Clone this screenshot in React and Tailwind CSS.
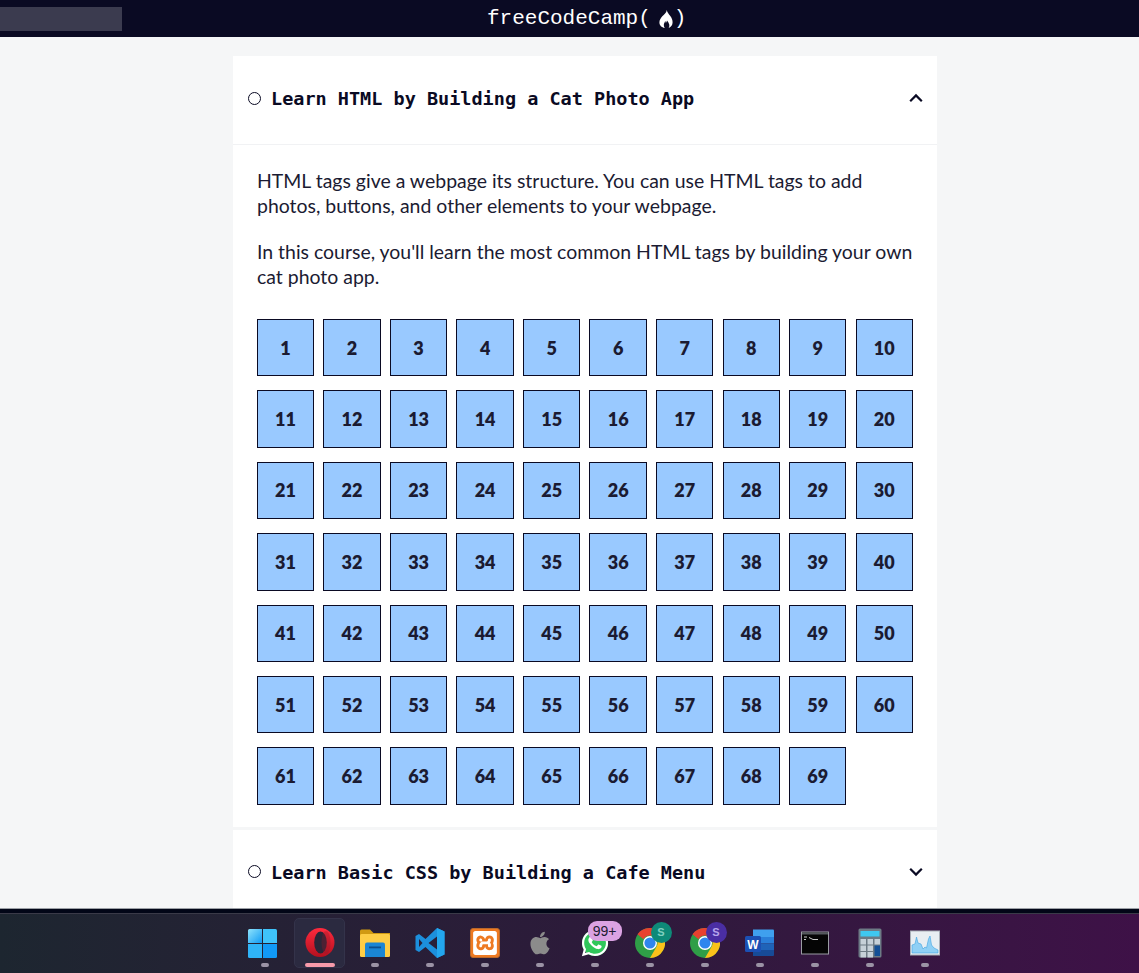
import { FaApple, FaWhatsapp } from "react-icons/fa";
import { SiXampp } from "react-icons/si";

const steps = Array.from({ length: 69 }, (_, i) => i + 1);

function Radio() {
  return <span className="w-[13px] h-[13px] rounded-full border border-[#0a0a23] shrink-0" />;
}

function Chevron({ up }) {
  return (
    <svg width="14" height="10" viewBox="0 0 14 10" className="shrink-0 translate-x-[1px]">
      <path d={up ? "M1.2 8.2 7 2.4l5.8 5.8" : "M1.2 1.8 7 7.6l5.8-5.8"} fill="none" stroke="#0a0a23" strokeWidth="2.2" />
    </svg>
  );
}

function CourseHeader({ title, up }) {
  return (
    <div className="h-[88px] pb-[4px] pl-[15px] pr-[15px] flex items-center">
      <Radio />
      <h3 className="ml-[10px] flex-1 font-['DejaVu_Sans_Mono',monospace] font-bold text-[18.5px] text-[#0a0a23] translate-y-[1px]">{title}</h3>
      <Chevron up={up} />
    </div>
  );
}

function Flame() {
  return (
    <svg width="14" height="18" viewBox="0 0 14 18" className="ml-[8px] mr-[1px]">
      <path
        fillRule="evenodd"
        d="M7.800 0c.4 2.600 1.900 3.800 3.300 5.800 1.600 2.200 2.500 4.200 2.500 6.400 0 2.700-1.500 4.600-3.900 5.800.6-1.100.8-2.300.6-3.300-.3-1.600-1.300-2.800-2.300-4.300-.3 1.300-.6 1.800-1.200 2.300-.1-.8-.3-1.300-.6-1.800-.3 1.100-.9 1.900-1.200 2.900-.4 1.500-.1 3 .8 4.200C2.600 17.600.4 15.500.4 12.300.4 9.700 2 7.900 3.300 6.300 5 4.300 7.500 3 7.800 0Z"
        fill="#fff"
      />
    </svg>
  );
}

function WindowsIcon() {
  return (
    <svg width="30" height="30" viewBox="3 0 30 30" className="overflow-visible">
      <defs>
        <linearGradient id="win" x1="0" y1="0" x2="1" y2="1">
          <stop offset="0" stopColor="#8fe3fb" />
          <stop offset="1" stopColor="#0f9bf5" />
        </linearGradient>
      </defs>
      <path d="M1 2.500A1.500 1.500 0 0 1 2.500 1H15v14H1Z" fill="url(#win)" />
      <path d="M16 1h12.500A1.500 1.500 0 0 1 30 2.500V15H16Z" fill="#3fc3fa" />
      <path d="M1 16h14v14H2.500A1.500 1.500 0 0 1 1 28.500Z" fill="#2fb4f8" />
      <path d="M16 16H30v12.500A1.500 1.500 0 0 1 28.500 30H16Z" fill="#1199f6" />
    </svg>
  );
}

function OperaIcon() {
  return (
    <svg width="30" height="30" viewBox="0 0 30 30">
      <defs>
        <linearGradient id="opera" x1="0" y1="0" x2="0" y2="1">
          <stop offset="0" stopColor="#ff2a3d" />
          <stop offset="1" stopColor="#b3101f" />
        </linearGradient>
      </defs>
      <circle cx="15" cy="14.500" r="14.500" fill="url(#opera)" />
      <ellipse cx="15.500" cy="14.500" rx="6.300" ry="11" fill="#2a2638" />
      <ellipse cx="21" cy="14.500" rx="4.500" ry="11.500" fill="#8d1a2c" opacity="0.35" />
    </svg>
  );
}

function FolderIcon() {
  return (
    <svg width="30" height="30" viewBox="0 0 30 30">
      <path d="M0 3a1.500 1.500 0 0 1 1.500-1.500h8.500l3.500 3.500H30v6H0Z" fill="#d09a12" />
      <rect x="0" y="6" width="30" height="23" rx="1.500" fill="#fdcd45" />
      <path d="M5 16.500a2 2 0 0 1 2-2h16a2 2 0 0 1 2 2V29H5Z" fill="#1a86d4" />
      <rect x="9" y="18.500" width="12" height="1.800" fill="#0b4f8e" />
    </svg>
  );
}

function VsCodeIcon() {
  return (
    <svg width="30" height="30" viewBox="0 0 30 30">
      <path d="M22 0 29.500 3.500v23L22 30 10.500 19 4 24 .5 22V8L4 6l6.500 5Z M22 8.500 13.500 15 22 21.500Z M4 11v8l3.500-4Z" fillRule="evenodd" fill="#1c8fdc" />
      <path d="M22 0 29.500 3.500v23L22 30Z" fill="#23a6ee" />
    </svg>
  );
}

function XamppIcon() {
  return (
    <div className="w-[30px] h-[30px] rounded-[3px] bg-[#ee7a22] border border-[#b9682c] flex items-center justify-center">
      <SiXampp className="w-[24px] h-[24px] text-white" />
    </div>
  );
}

function WhatsappIcon() {
  return (
    <div className="relative w-[30px] h-[30px]">
      <span className="absolute left-[2px] top-[2px] w-[26px] h-[26px] rounded-full bg-[#2fc75a]" />
      <FaWhatsapp className="absolute inset-0 w-[30px] h-[30px] text-white" />
    </div>
  );
}

function ChromeIcon() {
  return (
    <svg width="30" height="30" viewBox="0 0 30 30">
      <circle cx="15" cy="15" r="15" fill="#2f9e47" />
      <path d="M15 0a15 15 0 0 1 13 7.500H15a7.500 7.500 0 0 0-6.500 3.750L2.500 6.300A15 15 0 0 1 15 0Z" fill="#e8412f" />
      <path d="M28 7.500A15 15 0 0 1 15 30l6.500-11.250A7.500 7.500 0 0 0 15 7.500Z" fill="#fbc21a" />
      <circle cx="15" cy="15" r="7" fill="#fff" />
      <circle cx="15" cy="15" r="5.600" fill="#2f86ee" />
    </svg>
  );
}

function WordIcon() {
  return (
    <svg width="30" height="30" viewBox="0 0 30 30">
      <path d="M8 1.500h20a1 1 0 0 1 1 1V9H8Z" fill="#3fa0ee" />
      <rect x="8" y="9" width="21" height="6.500" fill="#2a7fd9" />
      <rect x="8" y="15.500" width="21" height="6.500" fill="#1f63b8" />
      <path d="M8 22h21v5a1 1 0 0 1-1 1H8Z" fill="#174b97" />
      <rect x="0" y="8" width="16" height="16" rx="1.500" fill="#1b50b4" />
      <text x="8" y="20.500" textAnchor="middle" fontFamily="Liberation Sans, sans-serif" fontSize="12" fontWeight="700" fill="#fff">W</text>
    </svg>
  );
}

function TerminalIcon() {
  return (
    <svg width="30" height="30" viewBox="0 0 30 30">
      <rect x="1" y="3.500" width="28" height="23" fill="#9a9ca3" />
      <rect x="2" y="4.500" width="26" height="21" fill="#050505" />
      <rect x="2" y="4.500" width="26" height="2" fill="#55585e" />
      <path d="M4 9h3M4 11.500h2M9 9.500l4 2h5" stroke="#c9c9c9" strokeWidth="1" fill="none" />
    </svg>
  );
}

function CalculatorIcon() {
  const keys = [
    [5, 11], [12, 11], [19, 11],
    [5, 17.500], [12, 17.500],
    [5, 24], [12, 24],
  ];
  return (
    <svg width="30" height="30" viewBox="0 0 30 30">
      <rect x="3.500" y="0.500" width="23" height="29" rx="1.500" fill="#6d7a85" />
      <rect x="5.500" y="3" width="19" height="5.500" fill="#3fc8f0" />
      {keys.map(([x, y]) => (
        <rect key={`${x}-${y}`} x={x + 0.5} y={y} width="5.500" height="5.500" fill="#c6d0d8" />
      ))}
      <rect x="19.500" y="17.500" width="5.500" height="10.500" fill="#134f96" />
    </svg>
  );
}

function MonitorIcon() {
  return (
    <svg width="30" height="30" viewBox="0 0 30 30">
      <rect x="0.500" y="3" width="29" height="24" fill="#e8eef2" stroke="#a9b0b8" />
      <path
        d="M2 25V17l3-1 1.500-7L8 15l3 1 2 5 2-2 1.500 1 2-9L20 8l1.500 9 2.500 3 4 2v3Z"
        fill="#8fd0f5"
        stroke="#3ea2e0"
        strokeWidth="0.600"
      />
    </svg>
  );
}

function TaskIcon({ children, active }) {
  return (
    <div className="relative w-[55px] h-full flex flex-col items-center">
      {active && <span className="absolute left-[2px] top-[4px] w-[51px] h-[50px] rounded-[5px] bg-[#2b2a40] border border-[#34334a]" />}
      <div className="relative mt-[14px] w-[30px] h-[30px] flex items-center justify-center">{children}</div>
      <span className={active ? "relative mt-[5px] w-[30px] h-[4px] rounded-full bg-[#f79aaa]" : "relative mt-[5px] w-[8px] h-[4px] rounded-full bg-[#9b93a5]"} />
    </div>
  );
}

function Badge({ color, text }) {
  return (
    <span className={`absolute left-[16px] top-[-6px] w-[21px] h-[21px] rounded-full ${color} flex items-center justify-center font-['Liberation_Sans',sans-serif] font-bold text-[11px] ${text}`}>S</span>
  );
}

export default function App() {
  return (
    <div className="h-screen flex flex-col overflow-hidden bg-[#f5f6f7]">
      <nav className="h-[37px] shrink-0 bg-[#0a0a23] flex items-center">
        <div className="w-[122px] h-[24px] bg-[#3b3b4f]" />
        <div className="ml-[365px] flex items-center text-white font-['Liberation_Mono',monospace] text-[21px]">
          <span>freeCodeCamp(</span>
          <Flame />
          <span>)</span>
        </div>
      </nav>

      <main className="flex-1 min-h-0 overflow-hidden pt-[19px] pl-[31px] flex flex-col items-center gap-[3px]">
        <section className="w-[704px] shrink-0 bg-white">
          <div className="border-b border-[#f1f2f4]">
            <CourseHeader title="Learn HTML by Building a Cat Photo App" up />
          </div>
          <div className="pt-[23px] pb-[22px] px-[24px] font-['Lato',sans-serif] text-[19.45px] leading-[25px] text-[#1b1b32]">
            <p className="mb-[21px]">HTML tags give a webpage its structure. You can use HTML tags to add photos, buttons, and other elements to your webpage.</p>
            <p className="mb-[30px]">In this course, you'll learn the most common HTML tags by building your own cat photo app.</p>
            <div className="ml-[-0.2px] grid grid-cols-[repeat(10,57.4px)] gap-x-[9.15px] gap-y-[14px]">
              {steps.map((n) => (
                <a key={n} className="h-[57.4px] pt-[1px] border border-[#0a0a23] bg-[#99c9ff] flex items-center justify-center font-[800] text-[18px] text-[#1b1b32]">
                  {n}
                </a>
              ))}
            </div>
          </div>
        </section>
        <section className="w-[704px] shrink-0 bg-white">
          <CourseHeader title="Learn Basic CSS by Building a Cafe Menu" />
        </section>
      </main>

      <div className="shrink-0 h-[1px] bg-[#9ca0a6]" />
      <div className="shrink-0 h-[4px] bg-[#020617]" />
      <footer className="shrink-0 h-[60px] border-t border-[#3a3a48] bg-gradient-to-r from-[#1d2630] via-[#2c1b3a] to-[#3e1147] pl-[237px] flex">
        <TaskIcon><WindowsIcon /></TaskIcon>
        <TaskIcon active><OperaIcon /></TaskIcon>
        <TaskIcon><FolderIcon /></TaskIcon>
        <TaskIcon><VsCodeIcon /></TaskIcon>
        <TaskIcon><XamppIcon /></TaskIcon>
        <TaskIcon><FaApple className="w-[26px] h-[26px] text-[#8b8b8b]" /></TaskIcon>
        <TaskIcon>
          <WhatsappIcon />
          <span className="absolute left-[8px] top-[-7px] w-[34px] h-[20px] rounded-[9px] bg-[#dba2e3] flex items-center justify-center font-['Liberation_Sans',sans-serif] text-[14px] text-[#1b1b32]">99+</span>
        </TaskIcon>
        <TaskIcon><ChromeIcon /><Badge color="bg-[#0e8a78]" text="text-[#7fd0c0]" /></TaskIcon>
        <TaskIcon><ChromeIcon /><Badge color="bg-[#4a2ea3]" text="text-[#b5a5ec]" /></TaskIcon>
        <TaskIcon><WordIcon /></TaskIcon>
        <TaskIcon><TerminalIcon /></TaskIcon>
        <TaskIcon><CalculatorIcon /></TaskIcon>
        <TaskIcon><MonitorIcon /></TaskIcon>
      </footer>
    </div>
  );
}
